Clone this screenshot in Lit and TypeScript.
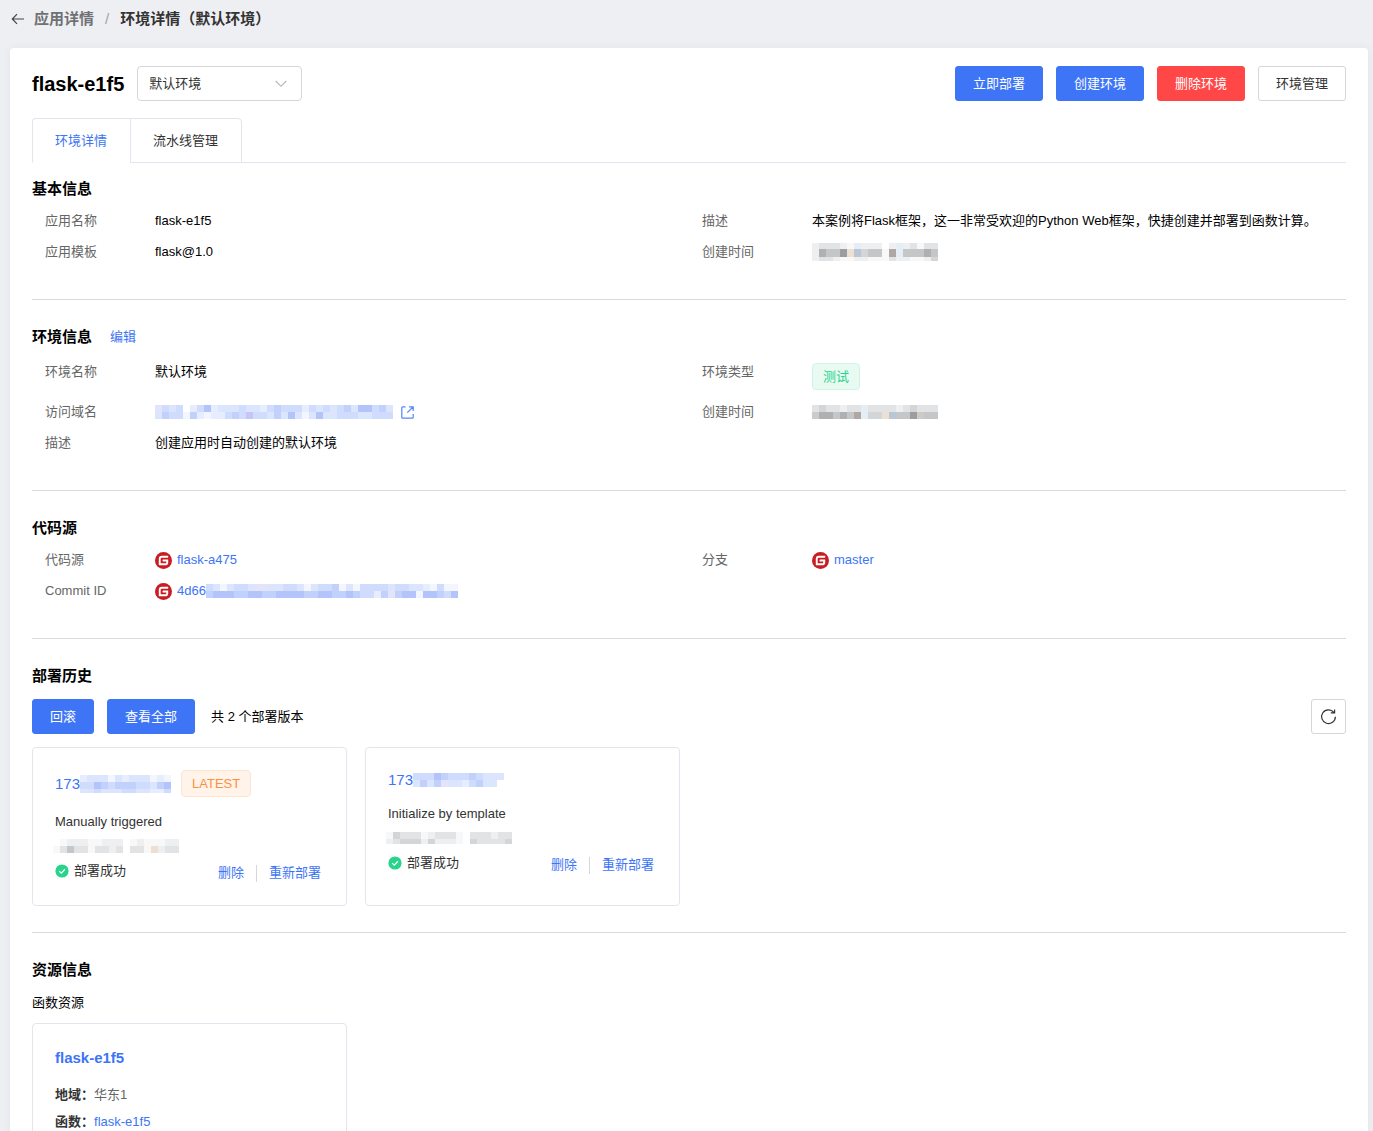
import { LitElement, html, css, svg } from "lit";
import { customElement, property } from "lit/decorators.js";

const PALETTE: Record<string, string> = {
  "1": "#f3f6ff",
  "2": "#e6edff",
  "3": "#dbe5fe",
  "4": "#cfdcfd",
  "5": "#c2d0fc",
  "6": "#b3c4fb",
  "7": "#e3e3fc",
  "8": "#c6c4f8",
  a: "#f8f8f8",
  b: "#eeeff0",
  c: "#e2e3e4",
  d: "#d4d5d6",
  e: "#c5c6c8",
  f: "#aeb0b2",
  g: "#9b9da0",
  h: "#eedfd3",
  i: "#bac6d3",
  j: "#e5eef4",
  k: "#cfcac6",
  l: "#b0a6a6",
};

/* A masked value, drawn as a strip of coloured cells, 7px wide each. */
@customElement("masked-value")
class MaskedValue extends LitElement {
  @property({ attribute: false }) rows: string[] = [];
  @property({ attribute: false }) heights: number[] = [7, 7];

  static styles = css`
    :host {
      display: block;
      flex: none;
    }
    .strip {
      display: block;
    }
  `;

  render() {
    const width = Math.max(0, ...this.rows.map((r) => r.length)) * 7;
    const total = this.heights.reduce((a, b) => a + b, 0);
    let y = 0;
    const cells = this.rows.map((row, r) => {
      const top = y;
      const h = this.heights[r];
      y += h;
      return [...row].map((c, i) =>
        PALETTE[c]
          ? svg`<rect x=${i * 7} y=${top} width="7" height=${h} fill=${PALETTE[c]}></rect>`
          : null
      );
    });
    return html`<svg class="strip" width=${width} height=${total} shape-rendering="crispEdges" aria-hidden="true">${cells}</svg>`;
  }
}

const backIcon = html`<svg width="14" height="14" viewBox="0 0 14 14" fill="none" stroke="#444" stroke-width="1.2" aria-hidden="true"><path d="M13 7H1.5M6 2.2L1.3 7L6 11.8"/></svg>`;

const chevronIcon = html`<svg class="chevron" width="12" height="8" viewBox="0 0 12 8" fill="none" stroke="#b4b6ba" stroke-width="1.1" aria-hidden="true"><path d="M0.7 1L6 6.3L11.3 1"/></svg>`;

const externalIcon = html`<svg width="13" height="13" viewBox="0 0 13 13" fill="none" stroke="#5286f7" stroke-width="1.2" aria-hidden="true"><path d="M4.6 0.9H1.6Q0.8 0.9 0.8 1.7V11.3Q0.8 12.2 1.6 12.2H11.3Q12.2 12.2 12.2 11.3V8M8 0.9H12.2V5M12 1L6.3 6.7"/></svg>`;

const giteeIcon = html`<svg width="17" height="17" viewBox="0 0 24 24" aria-hidden="true"><circle cx="12" cy="12" r="12" fill="#c71d23"/><path fill="#fff" d="M18.074 5.333c.328 0 .593.266.592.593v1.482a.594.594 0 0 1-.593.592H9.777c-.982 0-1.778.796-1.778 1.778v5.63c0 .327.266.592.593.592h5.63c.982 0 1.778-.796 1.778-1.778v-.296a.593.593 0 0 0-.592-.593h-4.15a.592.592 0 0 1-.592-.592v-1.482a.593.593 0 0 1 .593-.592h6.815c.327 0 .593.265.593.592v3.408a4 4 0 0 1-4 4H5.926a.593.593 0 0 1-.593-.593V9.778a4.444 4.444 0 0 1 4.445-4.444h8.296Z"/></svg>`;

const successIcon = html`<svg width="14" height="14" viewBox="0 0 14 14" aria-hidden="true"><circle cx="7" cy="7" r="6.6" fill="#28d48c"/><path d="M4.2 7.1L6.3 9.1L9.9 5.3" fill="none" stroke="#fff" stroke-width="1.3"/></svg>`;

const refreshIcon = html`<svg width="17" height="17" viewBox="0 0 17 17" fill="none" stroke="#333" stroke-width="1.2" aria-hidden="true"><path d="M15.4 8.8A6.9 6.9 0 1 1 13.9 4.4M14.6 1.4V4.9H10.8"/></svg>`;

interface Version {
  rows: string[];
  heights: number[];
  latest: boolean;
  trigger: string;
  time: string[];
  timeHeights: number[];
}

const VERSIONS: Version[] = [
  {
    rows: ["2333132333121", "4465455544356", "3343334433224"],
    heights: [7, 7, 4],
    latest: true,
    trigger: "Manually triggered",
    time: [" abbbaabbb abaaabb", "aceccaccbc ccahbcc"],
    timeHeights: [7, 7],
  },
  {
    rows: ["4446544454333", "353573324533 "],
    heights: [7, 7],
    latest: false,
    trigger: "Initialize by template",
    time: ["adcccabccca cccbcc", "bcdddbdbbba dccccd"],
    timeHeights: [7, 5],
  },
];

@customElement("app-root")
class AppRoot extends LitElement {
  static styles = css`
    :host {
      display: block;
      box-sizing: border-box;
      min-height: 100vh;
      padding: 0 5px 20px 10px;
      background: #eeeff3;
      color: #000;
      font: 13px/20px "Liberation Sans", "Noto Sans CJK SC", sans-serif;
    }
    * {
      box-sizing: border-box;
    }
    h1, h2, h3, p, dl, dd, dt {
      margin: 0;
      font-size: inherit;
      font-weight: inherit;
    }
    a {
      color: #3d75f6;
      text-decoration: none;
    }
    svg {
      flex: none;
      display: block;
    }
    button, select {
      font: inherit;
      margin: 0;
      cursor: pointer;
    }
    .crumbs {
      display: flex;
      align-items: center;
      height: 38px;
      margin-bottom: 10px;
      font-size: 15px;
    }
    .back {
      display: flex;
      padding: 0;
      margin: 0 9px 0 1px;
      border: 0;
      background: none;
    }
    .crumbs a {
      color: #707174;
      font-weight: 700;
    }
    .slash {
      margin: 0 11px;
      color: #a0a2a8;
    }
    .current {
      color: #333;
      font-weight: 700;
    }
    .panel {
      padding: 18px 22px;
      border-radius: 4px;
      background: #fff;
      box-shadow: 0 0 8px rgba(50, 60, 90, 0.06);
    }
    .head {
      display: flex;
      align-items: center;
      gap: 13px;
      margin-bottom: 17px;
    }
    .name {
      font-size: 20px;
      font-weight: 700;
    }
    .picker {
      display: grid;
      align-items: center;
      width: 165px;
    }
    .picker select,
    .chevron {
      grid-area: 1 / 1;
    }
    .picker select {
      appearance: none;
      width: 100%;
      height: 35px;
      padding: 0 32px 0 11px;
      border: 1px solid #d5d6d9;
      border-radius: 4px;
      background: #fff;
      color: #333;
    }
    .chevron {
      justify-self: end;
      margin-right: 15px;
      pointer-events: none;
    }
    .actions {
      display: flex;
      gap: 13px;
      margin-left: auto;
    }
    .btn {
      height: 35px;
      padding: 0 17px;
      border: 1px solid #d5d6d9;
      border-radius: 3px;
      background: #fff;
      color: #333;
      white-space: nowrap;
    }
    .primary {
      border-color: #3d75f6;
      background: #3d75f6;
      color: #fff;
    }
    .danger {
      border-color: #ff4747;
      background: #ff4747;
      color: #fff;
    }
    .tabs {
      display: flex;
      border-bottom: 1px solid #e3e5ee;
    }
    .tab {
      height: 45px;
      margin-bottom: -1px;
      padding: 0 23px 0 22px;
      border: 1px solid #e3e5ee;
      background: #fff;
      color: #333;
    }
    .tab:first-child {
      border-right: 0;
      border-radius: 4px 0 0 0;
    }
    .tab:last-child {
      border-radius: 0 4px 0 0;
    }
    .tab.on {
      border-bottom-color: #fff;
      color: #3d75f6;
    }
    .section {
      padding: 25px 0 31px;
      border-bottom: 1px solid #d9dade;
    }
    .section.first {
      padding-top: 14px;
    }
    .section.history {
      padding-bottom: 26px;
    }
    .section.last {
      border-bottom: 0;
    }
    .title {
      display: flex;
      align-items: center;
      gap: 18px;
      height: 24px;
      margin-bottom: 5px;
    }
    .title.roomy {
      margin-bottom: 8px;
    }
    .title.wide {
      margin-bottom: 11px;
    }
    .title h2 {
      font-size: 15px;
      font-weight: 700;
    }
    .fields {
      display: grid;
      grid-template-columns: 1fr 1fr;
    }
    .field {
      display: flex;
      align-items: flex-start;
      padding: 5px 0 6px 13px;
    }
    .field dt {
      flex: none;
      width: 110px;
      color: #666;
    }
    .field dd {
      display: flex;
      align-items: center;
      min-height: 20px;
      white-space: nowrap;
    }
    .field.tagged {
      padding-bottom: 7px;
    }
    .link {
      display: flex;
      align-items: center;
      gap: 8px;
    }
    .link.repo {
      gap: 5px;
    }
    .joined {
      display: flex;
      align-items: center;
    }
    .tag {
      height: 27px;
      padding: 0 10px;
      border: 1px solid #cef4e5;
      border-radius: 4px;
      background: #e9faf3;
      color: #28d48c;
      font-size: 13px;
      line-height: 25px;
    }
    .field .tag {
      margin-top: 1px;
    }
    .latest {
      border-color: #ffe4d0;
      background: #fff3ea;
      color: #ff8f3c;
    }
    .toolbar {
      display: flex;
      align-items: center;
      gap: 13px;
      margin-bottom: 13px;
    }
    .count {
      margin-left: 3px;
    }
    .refresh {
      display: flex;
      align-items: center;
      justify-content: center;
      width: 35px;
      padding: 0;
      margin-left: auto;
    }
    .cards {
      display: grid;
      grid-template-columns: repeat(4, 1fr);
      gap: 18px;
    }
    .card {
      min-height: 159px;
      padding: 22px 22px 20px;
      border: 1px solid #e3e5ee;
      border-radius: 4px;
      color: #333;
    }
    .version {
      display: flex;
      align-items: center;
      gap: 10px;
      margin-bottom: 15px;
      font-size: 15px;
      line-height: 19px;
    }
    .time {
      display: flex;
      align-items: center;
      height: 27px;
      margin-left: -2px;
    }
    .foot {
      display: flex;
      justify-content: space-between;
      padding-right: 3px;
      line-height: 24px;
    }
    .status {
      display: flex;
      align-items: center;
      gap: 5px;
      height: 24px;
    }
    .ops {
      display: flex;
      align-items: center;
      gap: 12px;
      padding-top: 2px;
    }
    .bar {
      width: 1px;
      height: 17px;
      background: #d5d6d9;
    }
    .sub {
      margin-bottom: 10px;
    }
    .resource {
      margin-bottom: 11px;
      font-size: 15px;
      font-weight: 700;
      line-height: 24px;
    }
    .pair {
      display: flex;
      line-height: 27px;
      color: #666;
    }
    .pair dt {
      color: #333;
      font-weight: 700;
    }
  `;

  private versionCard(v: Version) {
    return html`
      <article class="card">
        <h3 class="version">
          <a class="joined" href="#version">173<masked-value .rows=${v.rows} .heights=${v.heights}></masked-value></a>
          ${v.latest ? html`<span class="tag latest">LATEST</span>` : null}
        </h3>
        <p>${v.trigger}</p>
        <div class="time"><masked-value .rows=${v.time} .heights=${v.timeHeights}></masked-value></div>
        <div class="foot">
          <span class="status">${successIcon}部署成功</span>
          <span class="ops"><a href="#delete">删除</a><span class="bar"></span><a href="#redeploy">重新部署</a></span>
        </div>
      </article>
    `;
  }

  render() {
    return html`
      <nav class="crumbs">
        <button class="back" aria-label="返回">${backIcon}</button>
        <a href="#app">应用详情</a><span class="slash">/</span><span class="current">环境详情（默认环境）</span>
      </nav>
      <main class="panel">
        <header class="head">
          <h1 class="name">flask-e1f5</h1>
          <div class="picker">
            <select aria-label="环境"><option>默认环境</option></select>
            ${chevronIcon}
          </div>
          <div class="actions">
            <button class="btn primary">立即部署</button>
            <button class="btn primary">创建环境</button>
            <button class="btn danger">删除环境</button>
            <button class="btn">环境管理</button>
          </div>
        </header>
        <div class="tabs" role="tablist">
          <button class="tab on" role="tab" aria-selected="true">环境详情</button>
          <button class="tab" role="tab" aria-selected="false">流水线管理</button>
        </div>

        <section class="section first">
          <div class="title"><h2>基本信息</h2></div>
          <dl class="fields">
            <div class="field"><dt>应用名称</dt><dd>flask-e1f5</dd></div>
            <div class="field"><dt>描述</dt><dd>本案例将Flask框架，这一非常受欢迎的Python Web框架，快捷创建并部署到函数计算。</dd></div>
            <div class="field"><dt>应用模板</dt><dd>flask@1.0</dd></div>
            <div class="field"><dt>创建时间</dt><dd><masked-value
              .rows=${["bcccbajbbb bjbcacc", "bfeeghideealjeeefe", "bccbaabbaaacbbaabd"]}
              .heights=${[6, 8, 4]}></masked-value></dd></div>
          </dl>
        </section>

        <section class="section">
          <div class="title roomy"><h2>环境信息</h2><a href="#edit">编辑</a></div>
          <dl class="fields">
            <div class="field tagged"><dt>环境名称</dt><dd>默认环境</dd></div>
            <div class="field tagged"><dt>环境类型</dt><dd><span class="tag">测试</span></dd></div>
            <div class="field"><dt>访问域名</dt><dd><a class="link" href="#domain" aria-label="访问域名"><masked-value
              .rows=${["7434 24623334332454442434345366453", "3544152122454844353631363344433444"]}></masked-value>${externalIcon}</a></dd></div>
            <div class="field"><dt>创建时间</dt><dd><masked-value
              .rows=${["cdccbccjccccbcdccc", "kffefeljddhieegkee"]}></masked-value></dd></div>
            <div class="field"><dt>描述</dt><dd>创建应用时自动创建的默认环境</dd></div>
          </dl>
        </section>

        <section class="section">
          <div class="title"><h2>代码源</h2></div>
          <dl class="fields">
            <div class="field"><dt>代码源</dt><dd><a class="link repo" href="#repo">${giteeIcon}flask-a475</a></dd></div>
            <div class="field"><dt>分支</dt><dd><a class="link repo" href="#branch">${giteeIcon}master</a></dd></div>
            <div class="field"><dt>Commit ID</dt><dd><a class="link repo" href="#commit">${giteeIcon}<span class="joined">4d66<masked-value
              .rows=${["431344377334431344513144443443321411", "566655665566665566556544257566166546"]}></masked-value></span></a></dd></div>
          </dl>
        </section>

        <section class="section history">
          <div class="title wide"><h2>部署历史</h2></div>
          <div class="toolbar">
            <button class="btn primary">回滚</button>
            <button class="btn primary">查看全部</button>
            <span class="count">共 2 个部署版本</span>
            <button class="btn refresh" aria-label="刷新">${refreshIcon}</button>
          </div>
          <div class="cards">${VERSIONS.map((v) => this.versionCard(v))}</div>
        </section>

        <section class="section last">
          <div class="title wide"><h2>资源信息</h2></div>
          <p class="sub">函数资源</p>
          <div class="cards">
            <article class="card">
              <h3 class="resource"><a href="#resource">flask-e1f5</a></h3>
              <dl>
                <div class="pair"><dt>地域：</dt><dd>华东1</dd></div>
                <div class="pair"><dt>函数：</dt><dd><a href="#function">flask-e1f5</a></dd></div>
              </dl>
            </article>
          </div>
        </section>
      </main>
    `;
  }
}
